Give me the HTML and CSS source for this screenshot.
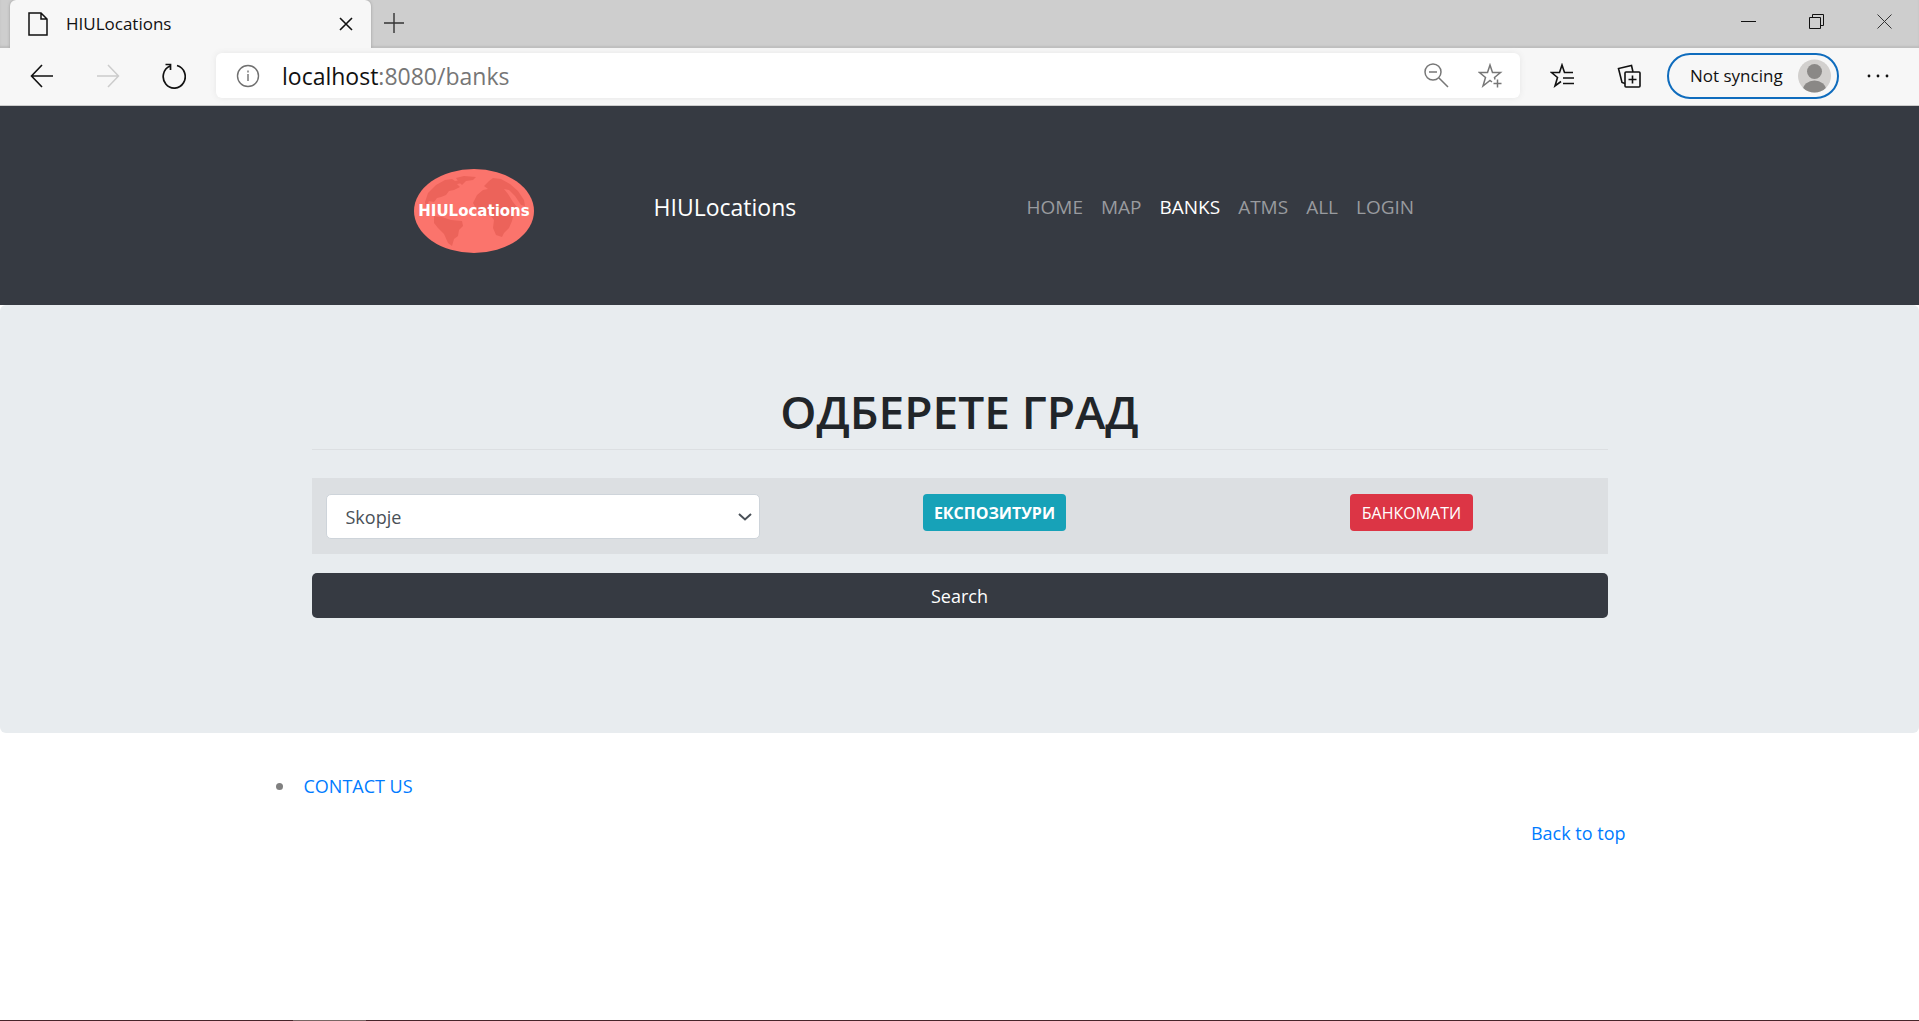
FILE: index.html
```html
<!DOCTYPE html>
<html lang="mk">
<head>
<meta charset="utf-8">
<title>HIULocations</title>
<link rel="stylesheet" href="styles.css">
</head>
<body>
<div class="browser">
  <div class="tabbar">
    <div class="tab">
      <svg class="tab-icon" width="20" height="24" viewBox="0 0 20 24" fill="none" stroke="#111" stroke-width="1.5"><path d="M1 1h12l6 6v16H1zM13 1v6h6"/></svg>
      <span class="tab-title">HIULocations</span>
      <button class="icon-btn" aria-label="Close tab"><svg width="14" height="14" viewBox="0 0 14 14" stroke="#111" stroke-width="1.6"><path d="M1 1l12 12M13 1L1 13"/></svg></button>
    </div>
    <button class="icon-btn new-tab" aria-label="New tab"><svg width="20" height="20" viewBox="0 0 20 20" stroke="#333" stroke-width="1.4"><path d="M10 0v20M0 10h20"/></svg></button>
    <div class="window-controls">
      <button class="icon-btn" aria-label="Minimize"><svg width="16" height="16" viewBox="0 0 16 16" stroke="#111"><path d="M0 7.500h15"/></svg></button>
      <button class="icon-btn" aria-label="Restore"><svg width="16" height="16" viewBox="0 0 16 16" fill="none" stroke="#111"><path d="M.5 3.500h11v11H.5zM3.500 3V.5h11v11H12"/></svg></button>
      <button class="icon-btn" aria-label="Close"><svg width="16" height="16" viewBox="0 0 16 16" stroke="#333"><path d="M.5 .5l14 14M14.500 .5l-14 14"/></svg></button>
    </div>
  </div>
  <div class="toolbar">
    <div class="nav-buttons">
      <button class="icon-btn" aria-label="Back"><svg width="24" height="24" viewBox="0 0 24 24" fill="none" stroke="#111" stroke-width="1.6"><path d="M23 12H2M12 1L1.500 12 12 23"/></svg></button>
      <button class="icon-btn" aria-label="Forward"><svg width="24" height="24" viewBox="0 0 24 24" fill="none" stroke="#ccc" stroke-width="1.500"><path d="M1 12h21M12 1l10.500 11L12 23"/></svg></button>
      <button class="icon-btn" aria-label="Refresh"><svg width="24" height="26" viewBox="0 0 24 26" fill="none" stroke="#111" stroke-width="1.7"><path d="M15 2.500A11 11.500 0 1 1 8 3M3.500 1.500H8.500V7"/></svg></button>
    </div>
    <div class="address">
      <svg width="24" height="24" viewBox="0 0 24 24" fill="none" stroke="#707070" stroke-width="1.400"><circle cx="12" cy="12" r="10.500"/><path d="M12 10v7M12 6.500v2"/></svg>
      <span class="url"><span class="host">localhost</span>:8080/banks</span>
      <button class="icon-btn" aria-label="Zoom"><svg width="26" height="26" viewBox="0 0 26 26" fill="none" stroke="#777" stroke-width="1.500"><circle cx="10" cy="9" r="8"/><path d="M6 9h8M16 15l9 9"/></svg></button>
      <button class="icon-btn" aria-label="Add favorite"><svg width="26" height="26" viewBox="0 0 26 26" fill="none" stroke="#777" stroke-width="1.500"><path d="M14 19l-2-1.500L5 23l2.500-8.500L1.500 9.500h8L12 2l2.500 7.500h8l-6 5 .5 2M19.500 16.500v8M15.500 20.500h8"/></svg></button>
    </div>
    <div class="actions">
      <button class="icon-btn" aria-label="Favorites"><svg width="26" height="26" viewBox="0 0 26 26" fill="none" stroke="#111" stroke-width="1.600"><path d="M23 9.500h-8.500L12 2 9.500 9.500h-8l6 5L5 23l6-4.500M13 15h11M13 20.500h11"/></svg></button>
      <button class="icon-btn" aria-label="Collections"><svg width="26" height="26" viewBox="0 0 26 26" fill="none" stroke="#111" stroke-width="1.600"><rect x="9" y="9" width="15" height="15" rx="1"/><path d="M16.500 12.500v8M12.500 16.500h8M17 9l-1.500-6.500L2.500 5.500l3.500 14 3 1"/></svg></button>
      <button class="profile">Not syncing
        <svg width="33" height="34" viewBox="0 0 33 34"><defs><clipPath id="avatar"><circle cx="16.500" cy="17" r="16.500"/></clipPath></defs><g clip-path="url(#avatar)"><rect width="33" height="34" fill="#d2d0ce"/><circle cx="16.500" cy="12.500" r="7.500" fill="#8a8886"/><ellipse cx="16.500" cy="31" rx="11.500" ry="9.500" fill="#8a8886"/></g></svg>
      </button>
      <button class="icon-btn" aria-label="Settings and more"><svg width="22" height="4" viewBox="0 0 22 4" fill="#111"><circle cx="2" cy="2" r="1.400"/><circle cx="11" cy="2" r="1.400"/><circle cx="20" cy="2" r="1.400"/></svg></button>
    </div>
  </div>
</div>

<header class="site-header">
  <div class="header-inner">
    <svg class="logo" width="120" height="84" viewBox="0 0 120 84" role="img" aria-label="HIULocations">
      <ellipse cx="60" cy="42" rx="60" ry="42" fill="#fb746c"/>
      <g fill="#ec635a">
        <path d="M11 33l3-9 8-8 9-5 7-1 3 2 6-1 1 3-5 1 3 3-6 3-5 1-3 4-5 2-4 1-3 4-5-1-2 4 3 4-4-2z"/>
        <path d="M42 9l8-2 12 1-3 3-7 1-4 4-4-4z"/>
        <path d="M20 47l8 1 9 3 11 1 1 5-4 4-1 6-4 3-2 7-4-3-4-9-6-6-4-5z"/>
        <path d="M59 34l4-8 6-5 5-1-4-3 5-5 4-3 8 1 9 5 8 7 6 9 1 6-4-1-6-9-6-6-5-1 4 5 5 8 4 5-3 5-2 9-3 7-5 5-2 4-6-2-3-7 1-8-4-5-8-1-5-4z"/>
      </g>
      <text x="60" y="47" text-anchor="middle" class="logo-text">HIULocations</text>
    </svg>
    <a class="brand" href="#">HIULocations</a>
    <nav class="menu">
      <a href="#">HOME</a><a href="#">MAP</a><a class="active" href="#">BANKS</a><a href="#">ATMS</a><a href="#">ALL</a><a href="#">LOGIN</a>
    </nav>
  </div>
</header>

<main class="hero">
  <form class="search-form">
    <h1>ОДБЕРЕТЕ ГРАД</h1>
    <div class="filters">
      <div class="select-wrap">
        <select aria-label="Град"><option>Skopje</option></select>
        <svg class="chevron" width="14" height="8" viewBox="0 0 14 8" fill="none" stroke="#495057" stroke-width="2"><path d="M1 1l6 5.500L13 1"/></svg>
      </div>
      <button type="button" class="btn btn-info">ЕКСПОЗИТУРИ</button>
      <button type="button" class="btn btn-danger">БАНКОМАТИ</button>
    </div>
    <button type="button" class="btn-search">Search</button>
  </form>
</main>

<footer class="site-footer">
  <ul><li><a href="#">CONTACT US</a></li></ul>
  <p><a href="#">Back to top</a></p>
</footer>
<div class="taskbar-edge"><span></span></div>
</body>
</html>
```
FILE: styles.css
```css
* { box-sizing: border-box; }

body {
  margin: 0;
  min-height: 100vh;
  display: flex;
  flex-direction: column;
  background: #fff;
  color: #212529;
  font: 18px/28px "Open Sans", "Noto Sans", sans-serif;
}

button { font: inherit; border: 0; padding: 0; background: none; color: inherit; }
a { color: #007bff; text-decoration: none; }
svg { display: block; flex: none; }
.icon-btn { display: flex; }

/* Browser window */
.tabbar {
  display: flex;
  align-items: center;
  height: 48px;
  padding-left: 10px;
  background: #cecece;
  box-shadow: inset 0 -2px 2px #bdbdbd;
}
.tab {
  display: flex;
  align-items: center;
  width: 361px;
  height: 48px;
  padding: 0 18px;
  border-radius: 6px 6px 0 0;
  background: #f7f7f7;
  box-shadow: 0 0 3px #999;
  clip-path: inset(0 -4px 0 -4px);
}
.tab-title { flex: 1; margin-left: 18px; font-size: 17px; color: #111; }
.new-tab { margin: 0 0 2px 13px; }
.window-controls { display: flex; gap: 52px; margin: 0 26px 5px auto; }

.toolbar {
  display: flex;
  align-items: center;
  height: 58px;
  padding: 0 30px 2px;
  background: #f7f7f7;
  border-bottom: 1px solid #ccc;
}
.nav-buttons { display: flex; align-items: center; gap: 42px; margin-right: 30px; }
.address {
  flex: 1;
  display: flex;
  align-items: center;
  height: 45px;
  padding: 0 16px 0 20px;
  border-radius: 6px;
  background: #fff;
  box-shadow: 0 0 6px #e6e6e6;
}
.url { flex: 1; margin-left: 22px; font-size: 23px; color: #767676; }
.host { color: #111; }
.address .icon-btn { margin-left: 29px; }
.actions { display: flex; align-items: center; margin-left: 30px; }
.actions .icon-btn { margin-right: 40px; }
.profile {
  display: flex;
  align-items: center;
  justify-content: space-between;
  width: 172px;
  height: 46px;
  margin: 0 28px 0 -15px;
  padding: 0 6px 0 21px;
  border: 2px solid #0f6cbd;
  border-radius: 23px;
  font-size: 17px;
  color: #111;
}
.actions .icon-btn:last-child { margin-right: 0; }

/* Site header */
.site-header { padding: 63px 0 52px; background: #363a42; }
.header-inner {
  display: flex;
  align-items: center;
  width: 1092px;
  max-width: 100%;
  margin: 0 auto;
}
.logo-text { font: bold 15px "DejaVu Sans", sans-serif; fill: #fff; }
.brand { width: 373px; margin: 0 0 8px 120px; font-size: 23px; color: #fff; }
.menu { display: flex; gap: 18px; margin-bottom: 8px; font-size: 19px; }
.menu a { color: #999b9f; }
.menu .active { color: #fff; }

/* City search */
.hero { padding: 76px 32px 115px; border-radius: 6px; background: #e8ecef; }
.search-form { max-width: 1296px; margin: 0 auto; }
h1 {
  margin: 0 0 28px;
  padding-bottom: 8px;
  border-bottom: 1px solid #dcdfe2;
  font-size: 46px;
  line-height: 60px;
  font-weight: 600;
  text-align: center;
}
.filters {
  display: grid;
  grid-template-columns: 462fr 442fr 392fr;
  justify-items: center;
  align-items: start;
  padding: 16px 0 15px;
  background: #dcdfe2;
}
.select-wrap { position: relative; justify-self: stretch; margin: 0 14px; }
select {
  display: block;
  width: 100%;
  height: 45px;
  padding: 0 19px;
  appearance: none;
  border: 1px solid #ced4da;
  border-radius: 5px;
  background: #fff;
  color: #495057;
  font: inherit;
}
.chevron { position: absolute; right: 8px; top: 19px; pointer-events: none; }
.btn { height: 37px; padding: 0 11px; border-radius: 4px; color: #fff; font-size: 16px; }
.btn-info { background: #17a2b8; font-weight: 700; }
.btn-danger { padding: 0 12px; background: #dc3545; }
.btn-search {
  display: block;
  width: 100%;
  height: 45px;
  margin-top: 19px;
  border-radius: 5px;
  background: #363a42;
  color: #fff;
}

/* Footer */
.site-footer {
  width: 100%;
  max-width: 1368px;
  margin: 0 auto;
  padding: 39px 18px 0 0;
}
.site-footer ul { margin: 0 0 19px; padding: 0; list-style: none; }
.site-footer li { display: flex; align-items: center; gap: 21px; }
.site-footer li::before {
  content: "";
  width: 7px;
  height: 7px;
  border-radius: 50%;
  background: #808080;
}
.site-footer p { margin: 0; text-align: right; }

.taskbar-edge { height: 1px; margin-top: auto; padding-left: 293px; background: #46252a; }
.taskbar-edge span { display: block; width: 73px; height: 1px; background: #776563; }
```
